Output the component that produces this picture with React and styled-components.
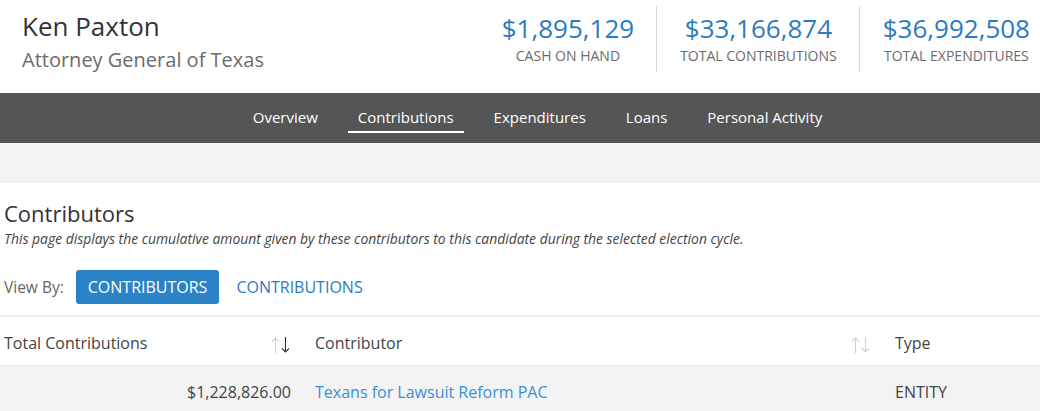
import React from 'react';
import styled, { createGlobalStyle } from 'styled-components';

const GlobalStyle = createGlobalStyle`
  body {
    margin: 0;
    font-family: "Open Sans", "Liberation Sans", sans-serif;
    color: #333;
    background: #fff;
  }
`;

const stats = [
  { value: '$1,895,129', label: 'CASH ON HAND' },
  { value: '$33,166,874', label: 'TOTAL CONTRIBUTIONS' },
  { value: '$36,992,508', label: 'TOTAL EXPENDITURES' },
];

const tabs = ['Overview', 'Contributions', 'Expenditures', 'Loans', 'Personal Activity'];

function SortIcon({ active }) {
  const up = active === 'up' ? '#333' : '#d0d0d0';
  const down = active === 'down' ? '#333' : '#d0d0d0';
  return (
    <SortSvg width="20" height="18" viewBox="0 0 20 18" fill="none" strokeWidth="1.1">
      <path d="M4.5 17V2M1 5.5L4.5 2L8 5.5" stroke={up} />
      <path d="M14.5 1V16M11 12.5L14.5 16L18 12.5" stroke={down} />
    </SortSvg>
  );
}

function App() {
  return (
    <>
      <GlobalStyle />
      <Header>
        <Who>
          <Name>Ken Paxton</Name>
          <Office>Attorney General of Texas</Office>
        </Who>
        <Stats>
          {stats.map((s, i) => (
            <Stat key={s.label} $first={i === 0}>
              <StatValue>{s.value}</StatValue>
              <StatLabel>{s.label}</StatLabel>
            </Stat>
          ))}
        </Stats>
      </Header>
      <Nav>
        {tabs.map((t) => (
          <Tab key={t} $active={t === 'Contributions'}>
            {t}
          </Tab>
        ))}
      </Nav>
      <Band />
      <Content>
        <Title>Contributors</Title>
        <Note>
          This page displays the cumulative amount given by these contributors to this candidate during the selected
          election cycle.
        </Note>
        <ViewBy>
          <ViewLabel>View By:</ViewLabel>
          <ViewButton $active>CONTRIBUTORS</ViewButton>
          <ViewButton>CONTRIBUTIONS</ViewButton>
        </ViewBy>
      </Content>
      <Table>
        <HeadRow>
          <Cell $w="310px">
            <HeadText>Total Contributions</HeadText>
            <SortIcon active="down" />
          </Cell>
          <Cell $w="580px">
            <HeadText>Contributor</HeadText>
            <SortIcon />
          </Cell>
          <Cell $grow>
            <HeadText>Type</HeadText>
          </Cell>
        </HeadRow>
        <BodyRow>
          <Cell $w="310px" $right>
            <Amount>$1,228,826.00</Amount>
          </Cell>
          <Cell $w="580px">
            <LinkText>Texans for Lawsuit Reform PAC</LinkText>
          </Cell>
          <Cell $grow>
            <Plain>ENTITY</Plain>
          </Cell>
        </BodyRow>
      </Table>
    </>
  );
}

export default App;

const Header = styled.header`
  height: 93px;
  display: flex;
  justify-content: space-between;
  align-items: flex-start;
  background: #fff;
`;

const Who = styled.div`
  padding: 9px 0 0 22px;
`;

const Name = styled.div`
  font-size: 26px;
  line-height: 34px;
  color: #333;
`;

const Office = styled.div`
  margin-top: 4px;
  font-size: 20px;
  line-height: 26px;
  color: #6b6b6b;
`;

const Stats = styled.div`
  display: flex;
  padding-top: 6px;
`;

const Stat = styled.div`
  display: flex;
  flex-direction: column;
  align-items: center;
  padding: 6px 22px 0 23px;
  height: 60px;
  border-left: ${(p) => (p.$first ? 'none' : '1px solid #d6d6d6')};
  &:last-child {
    padding-right: 10px;
  }
`;

const StatValue = styled.div`
  font-size: 26px;
  line-height: 32px;
  color: #2b7bc0;
`;

const StatLabel = styled.div`
  margin-top: 3px;
  font-size: 14px;
  line-height: 18px;
  color: #6b6b6b;
`;

const Nav = styled.nav`
  height: 50px;
  background: #555;
  display: flex;
  justify-content: center;
  padding-left: 35px;
  gap: 20px;
`;

const Tab = styled.div`
  position: relative;
  padding: 0 10px;
  font-size: 15px;
  line-height: 48px;
  color: #fff;
  &::after {
    content: '';
    display: ${(p) => (p.$active ? 'block' : 'none')};
    position: absolute;
    left: 0;
    right: 0;
    top: 38px;
    height: 2px;
    background: #fff;
  }
`;

const Band = styled.div`
  height: 40px;
  background: #f3f3f3;
`;

const Content = styled.section`
  padding: 15px 4px 0;
`;

const Title = styled.h2`
  margin: 0;
  font-weight: 400;
  font-size: 22px;
  line-height: 30px;
  color: #333;
`;

const Note = styled.p`
  margin: 2px 0 0;
  font-size: 13.9px;
  font-style: italic;
  line-height: 18px;
  color: #444;
`;

const ViewBy = styled.div`
  margin-top: 22px;
  display: flex;
  align-items: center;
`;

const ViewLabel = styled.span`
  font-size: 15.5px;
  color: #666;
  margin-right: 12px;
`;

const ViewButton = styled.button`
  border: none;
  border-radius: 3px;
  height: 34px;
  padding: 0 12px;
  margin-right: 5px;
  font-family: inherit;
  font-size: 16px;
  background: ${(p) => (p.$active ? '#2a83c6' : 'transparent')};
  color: ${(p) => (p.$active ? '#fff' : '#2b7bc0')};
  cursor: pointer;
`;

const Table = styled.div`
  margin-top: 11px;
  border-top: 2px solid #eee;
`;

const Row = styled.div`
  display: flex;
  align-items: center;
  box-sizing: border-box;
  padding-top: 4px;
`;

const HeadRow = styled(Row)`
  height: 50px;
  border-bottom: 2px solid #eee;
`;

const BodyRow = styled(Row)`
  height: 46px;
  background: #f3f3f3;
`;

const Cell = styled.div`
  display: flex;
  align-items: center;
  justify-content: ${(p) => (p.$right ? 'flex-end' : 'space-between')};
  box-sizing: border-box;
  width: ${(p) => p.$w || 'auto'};
  flex: ${(p) => (p.$grow ? '1' : 'none')};
  padding: 0 19px 0 4px;
  &:not(:first-child) {
    padding-left: 5px;
  }
`;

const HeadText = styled.span`
  font-size: 16px;
  color: #444;
`;

const SortSvg = styled.svg`
  display: block;
  margin-top: 4px;
`;

const Amount = styled.span`
  font-size: 16px;
  color: #444;
`;

const LinkText = styled.span`
  font-size: 16px;
  color: #3a8fd6;
`;

const Plain = styled.span`
  font-size: 16px;
  color: #444;
`;
